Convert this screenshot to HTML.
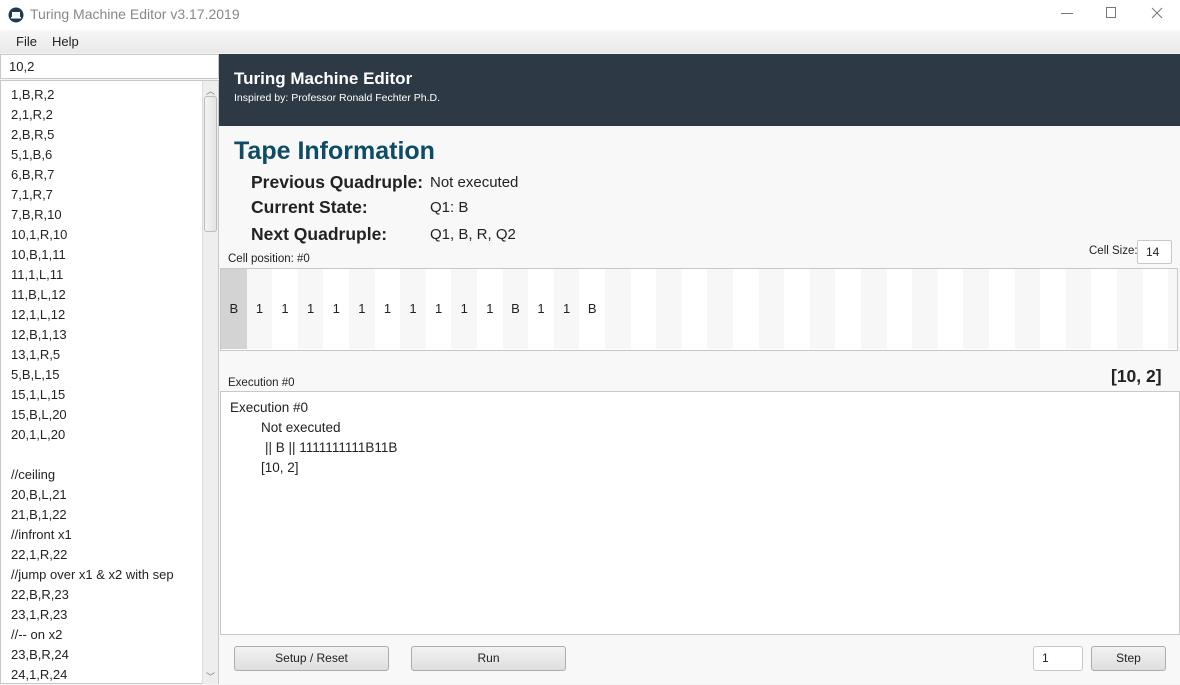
<!DOCTYPE html>
<html><head><style>
*{margin:0;padding:0;box-sizing:border-box}
body{width:1180px;height:684px;background:#f4f4f4;font-family:"Liberation Sans","DejaVu Sans",sans-serif;font-size:13px;color:#222;position:relative;overflow:hidden}
.a{position:absolute}
.btn{position:absolute;border:1px solid #acacac;border-radius:3px;background:linear-gradient(#f2f2f2,#dedede);text-align:center;font-size:12px;line-height:23px;color:#222}
.list div{height:20px;line-height:20px;padding-left:10px;font-size:13px}
.cell{position:absolute;top:0;height:80px;line-height:80px;text-align:center;font-size:13px}
</style></head><body>
<div class="a" style="left:0;top:0;width:1180px;height:30px;background:#fff"></div>
<svg class="a" style="left:8px;top:7px" width="16" height="16"><circle cx="8" cy="8" r="7.5" fill="#1c3b57"/><rect x="4" y="5" width="8" height="5" fill="#fff"/><rect x="3" y="10" width="10" height="1.5" fill="#fff"/></svg>
<div class="a" style="left:30px;top:6px;font-size:14px;color:#888">Turing Machine Editor v3.17.2019</div>
<div class="a" style="left:1061px;top:13px;width:12px;height:1px;background:#777"></div>
<div class="a" style="left:1106px;top:7px;width:10px;height:11px;border:1px solid #777"></div>
<svg class="a" style="left:1151px;top:7px" width="12" height="12"><path d="M1 1L11 11M11 1L1 11" stroke="#777" stroke-width="1"/></svg>
<div class="a" style="left:0;top:30px;width:1180px;height:23px;background:linear-gradient(#f7f7f7,#e9e9e9)"></div>
<div class="a" style="left:16px;top:34px;font-size:13px">File</div>
<div class="a" style="left:52px;top:34px;font-size:13px">Help</div>
<div class="a" style="left:0;top:54px;width:219px;height:25px;background:#fff;border:1px solid #c8c8c8"></div>
<div class="a" style="left:9px;top:59px;font-size:13px">10,2</div>
<div class="a list" style="left:0;top:80px;width:219px;height:604px;background:#fff;border:1px solid #c8c8c8;padding-top:4px">
<div>1,B,R,2</div><div>2,1,R,2</div><div>2,B,R,5</div><div>5,1,B,6</div><div>6,B,R,7</div><div>7,1,R,7</div><div>7,B,R,10</div><div>10,1,R,10</div><div>10,B,1,11</div><div>11,1,L,11</div><div>11,B,L,12</div><div>12,1,L,12</div><div>12,B,1,13</div><div>13,1,R,5</div><div>5,B,L,15</div><div>15,1,L,15</div><div>15,B,L,20</div><div>20,1,L,20</div><div></div><div>//ceiling</div><div>20,B,L,21</div><div>21,B,1,22</div><div>//infront x1</div><div>22,1,R,22</div><div>//jump over x1 &amp; x2 with sep</div><div>22,B,R,23</div><div>23,1,R,23</div><div>//-- on x2</div><div>23,B,R,24</div><div>24,1,R,24</div>
</div>
<div class="a" style="left:202px;top:81px;width:16px;height:603px;background:#eee;border-left:1px solid #ddd"></div>
<div class="a" style="left:204px;top:96px;width:13px;height:136px;background:linear-gradient(90deg,#f4f4f4,#e4e4e4);border:1px solid #bbb;border-radius:3px"></div>
<div class="a" style="left:206px;top:84px;font-size:9px;color:#777">︿</div>
<div class="a" style="left:206px;top:670px;font-size:9px;color:#777">﹀</div>
<div class="a" style="left:219px;top:54px;width:961px;height:72px;background:#2d3a45"></div>
<div class="a" style="left:234px;top:69px;font-size:17px;font-weight:bold;color:#fff">Turing Machine Editor</div>
<div class="a" style="left:234px;top:92px;font-size:10.5px;color:#fff">Inspired by: Professor Ronald Fechter Ph.D.</div>
<div class="a" style="left:219px;top:126px;width:961px;height:558px;background:#f8f8f8"></div>
<div class="a" style="left:234px;top:137px;font-size:25px;font-weight:bold;color:#0d4b66">Tape Information</div>
<div class="a" style="left:251px;top:172px;font-size:17.5px;font-weight:bold">Previous Quadruple:</div>
<div class="a" style="left:430px;top:174px;font-size:15px">Not executed</div>
<div class="a" style="left:251px;top:197px;font-size:17.5px;font-weight:bold">Current State:</div>
<div class="a" style="left:430px;top:199px;font-size:15px">Q1: B</div>
<div class="a" style="left:251px;top:224px;font-size:17.5px;font-weight:bold">Next Quadruple:</div>
<div class="a" style="left:430px;top:226px;font-size:15px">Q1, B, R, Q2</div>
<div class="a" style="left:1089px;top:245px;font-size:11.5px">Cell Size:</div>
<div class="a" style="left:1137px;top:240px;width:35px;height:24px;background:#fff;border:1px solid #c8c8c8;border-radius:2px;font-size:12px;line-height:22px;padding-left:8px">14</div>
<div class="a" style="left:228px;top:253px;font-size:11.5px">Cell position: #0</div>
<div class="a" style="left:220px;top:268px;width:958px;height:83px;border:1px solid #c8c8c8;background:#fff;overflow:hidden">
<div id="tape" style="position:relative;height:81px"></div></div>
<script>
var s=["B","1","1","1","1","1","1","1","1","1","1","B","1","1","B"];
var t=document.getElementById("tape"),h="";
for(var i=0;i<38;i++){var bg=i==0?"#d3d3d3":(i%2?"#f7f7f7":"#fff");h+='<div class="cell" style="left:'+(i*25.6)+'px;width:25.7px;background:'+bg+'">'+(s[i]||"")+'</div>';}
t.innerHTML=h;
</script>
<div class="a" style="left:228px;top:377px;font-size:11.5px">Execution #0</div>
<div class="a" style="left:1111px;top:366px;font-size:17.5px;font-weight:bold">[10, 2]</div>
<div class="a" style="left:220px;top:391px;width:960px;height:244px;background:#fff;border:1px solid #c8c8c8"></div>
<div class="a" style="left:230px;top:398px;font-size:13.5px;line-height:20px">Execution #0<br>
<span style="padding-left:31px">Not executed</span><br>
<span style="padding-left:35px">|| B || 1111111111B11B</span><br>
<span style="padding-left:31px">[10, 2]</span></div>
<div class="btn" style="left:234px;top:646px;width:155px;height:25px">Setup / Reset</div>
<div class="btn" style="left:411px;top:646px;width:155px;height:25px">Run</div>
<div class="a" style="left:1033px;top:646px;width:50px;height:25px;background:#fff;border:1px solid #c8c8c8;border-radius:3px;padding-left:8px;line-height:23px;font-size:12px">1</div>
<div class="btn" style="left:1091px;top:646px;width:75px;height:25px">Step</div>
</body></html>
